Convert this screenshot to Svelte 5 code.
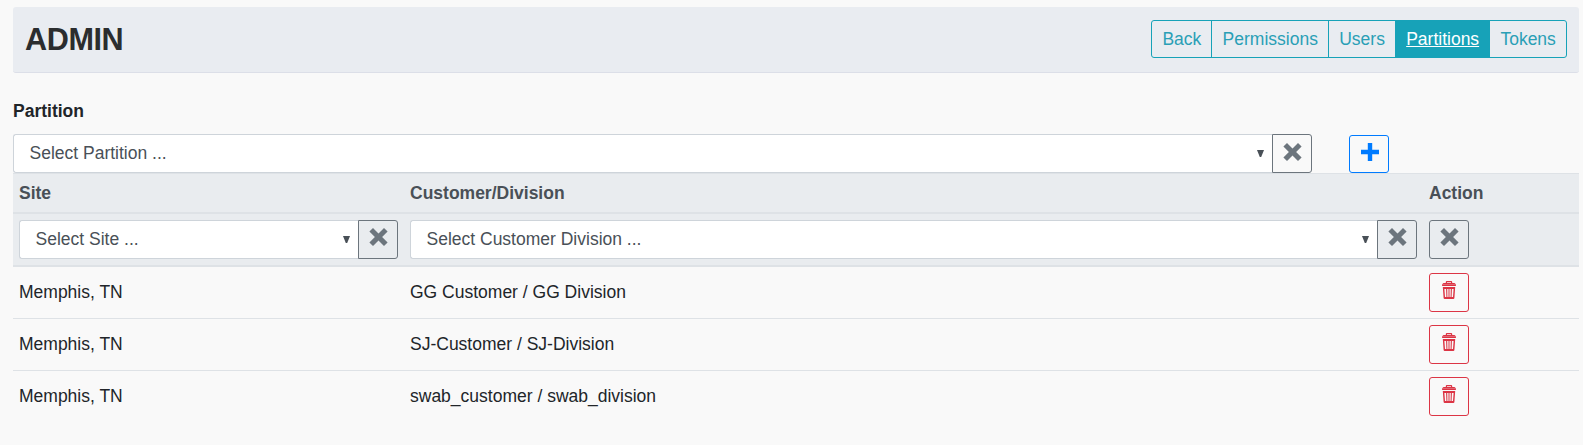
<script>
  const tabs = ['Back', 'Permissions', 'Users', 'Partitions', 'Tokens'];
  const active = 'Partitions';
  const rows = [
    { site: 'Memphis, TN', division: 'GG Customer / GG Division' },
    { site: 'Memphis, TN', division: 'SJ-Customer / SJ-Division' },
    { site: 'Memphis, TN', division: 'swab_customer / swab_division' }
  ];
</script>

{#snippet cross()}
  <svg width="19" height="18" viewBox="0 0 19 18">
    <path d="M4 0 9.5 5.4 15 0 18.6 3.6 13.1 9 18.6 14.4 15 18 9.5 12.6 4 18 0.4 14.4 5.9 9 0.4 3.6Z" fill="currentColor" />
  </svg>
{/snippet}

{#snippet picker(text)}
  <div class="group">
    <div class="select">
      <span>{text}</span>
      <svg width="7" height="7" viewBox="0 0 7 7"><path d="M0 0H7L4.2 7H2.8Z" fill="currentColor" /></svg>
    </div>
    <button class="btn gray joined" aria-label="Clear">{@render cross()}</button>
  </div>
{/snippet}

<main>
  <header>
    <h1>ADMIN</h1>
    <nav>
      {#each tabs as tab}
        <a href="#{tab}" class:active={tab === active}>{tab}</a>
      {/each}
    </nav>
  </header>

  <div class="label">Partition</div>
  <div class="toolbar">
    <div class="main-picker">{@render picker('Select Partition ...')}</div>
    <button class="btn blue" aria-label="Add">
      <svg width="18" height="18" viewBox="0 0 18 18"><path d="M6.8 0H11.2V6.8H18V11.2H11.2V18H6.8V11.2H0V6.8H6.8Z" fill="currentColor" /></svg>
    </button>
  </div>

  <section class="table">
    <div class="row head">
      <div>Site</div>
      <div>Customer/Division</div>
      <div>Action</div>
    </div>
    <div class="row filters">
      <div>{@render picker('Select Site ...')}</div>
      <div>{@render picker('Select Customer Division ...')}</div>
      <div><button class="btn gray" aria-label="Clear filters">{@render cross()}</button></div>
    </div>
    {#each rows as row}
      <div class="row body">
        <div class="text">{row.site}</div>
        <div class="text">{row.division}</div>
        <div>
          <button class="btn red" aria-label="Delete">
            <svg width="14" height="18" viewBox="0 0 14 18" fill="currentColor" fill-rule="evenodd">
              <path d="M3.8 2V1Q3.8 0 4.8 0H9.2Q10.2 0 10.2 1V2H12.5Q14 2.3 14 5H0Q0 2.3 1.5 2ZM5 1.2V2H9V1.2ZM1 3.4V3.8H13V3.4Z" />
              <path d="M0.8 6H13.2L12.4 17Q12.3 18 11.3 18H2.7Q1.7 18 1.6 17ZM2.4 8 3 16H4.4L4.1 8ZM5.2 8 5.4 16H6.5V8ZM7.5 8V16H8.6L8.8 8ZM9.9 8 9.6 16H11L11.6 8Z" />
            </svg>
          </button>
        </div>
      </div>
    {/each}
  </section>
</main>

<style>
  :global(body) {
    background: #f9f9f9;
  }
  main {
    box-sizing: border-box;
    height: 445px;
    padding: 7px 4px 0 13px;
    font: 17.5px/26px "Liberation Sans", Arial, sans-serif;
    color: #212529;
  }
  header {
    box-sizing: border-box;
    height: 66px;
    padding: 0 12px 2px;
    display: flex;
    align-items: center;
    justify-content: space-between;
    background: #e9ecf1;
    border-bottom: 1px solid #dcdfe8;
    border-radius: 3px;
  }
  h1 {
    margin: 0;
    font-size: 30.6px;
    line-height: 36px;
    letter-spacing: -0.4px;
    color: #2b2d2f;
  }
  nav {
    display: flex;
    box-sizing: border-box;
    height: 38px;
    border: 1px solid #17a2b8;
    border-radius: 3px;
  }
  nav a {
    padding: 0 10.15px;
    line-height: 36px;
    color: #2a9fb6;
    text-decoration: none;
  }
  nav a + a {
    border-left: 1px solid #17a2b8;
  }
  nav a.active {
    background: #17a2b8;
    color: #fff;
    text-decoration: underline;
  }
  .label {
    margin-top: 25px;
    height: 36px;
    font-weight: bold;
  }
  .toolbar {
    display: flex;
    align-items: flex-end;
    height: 39px;
    gap: 37px;
  }
  .main-picker {
    width: 1299px;
  }
  .group {
    display: flex;
    width: 100%;
  }
  .select {
    box-sizing: border-box;
    flex: 1;
    height: 39px;
    padding: 0 8px 0 15.5px;
    display: flex;
    align-items: center;
    justify-content: space-between;
    border: 1px solid #ced4da;
    border-right: 0;
    border-radius: 3px 0 0 3px;
    background: #fff;
    color: #495057;
  }
  .select span {
    line-height: 37px;
  }
  .btn {
    box-sizing: border-box;
    flex: none;
    width: 40px;
    height: 39px;
    padding: 0 0 3px;
    display: flex;
    align-items: center;
    justify-content: center;
    border: 1px solid;
    border-radius: 3px;
    background: transparent;
  }
  .joined {
    border-radius: 0 3px 3px 0;
  }
  .gray {
    padding-left: 1px;
    color: #6c757d;
  }
  .blue {
    height: 38px;
    padding: 0 0 4px 2px;
    color: #007bff;
  }
  .red {
    color: #dc3545;
  }
  .row {
    box-sizing: border-box;
    display: grid;
    grid-template-columns: 391px 1019px 1fr;
    align-items: center;
    border-top: 1px solid #dee2e6;
  }
  .row > div {
    padding: 0 6px;
  }
  .head {
    height: 40px;
    border-bottom: 1px solid #dee2e6;
    background: #e9ecef;
    color: #495057;
    font-weight: bold;
  }
  .filters {
    height: 53px;
    border-bottom: 1px solid #dee2e6;
    background: #e9ecef;
  }
  .body {
    height: 52px;
  }
  .row > .text {
    padding-bottom: 2px;
  }
  .row .btn {
    padding-bottom: 5px;
  }
</style>
